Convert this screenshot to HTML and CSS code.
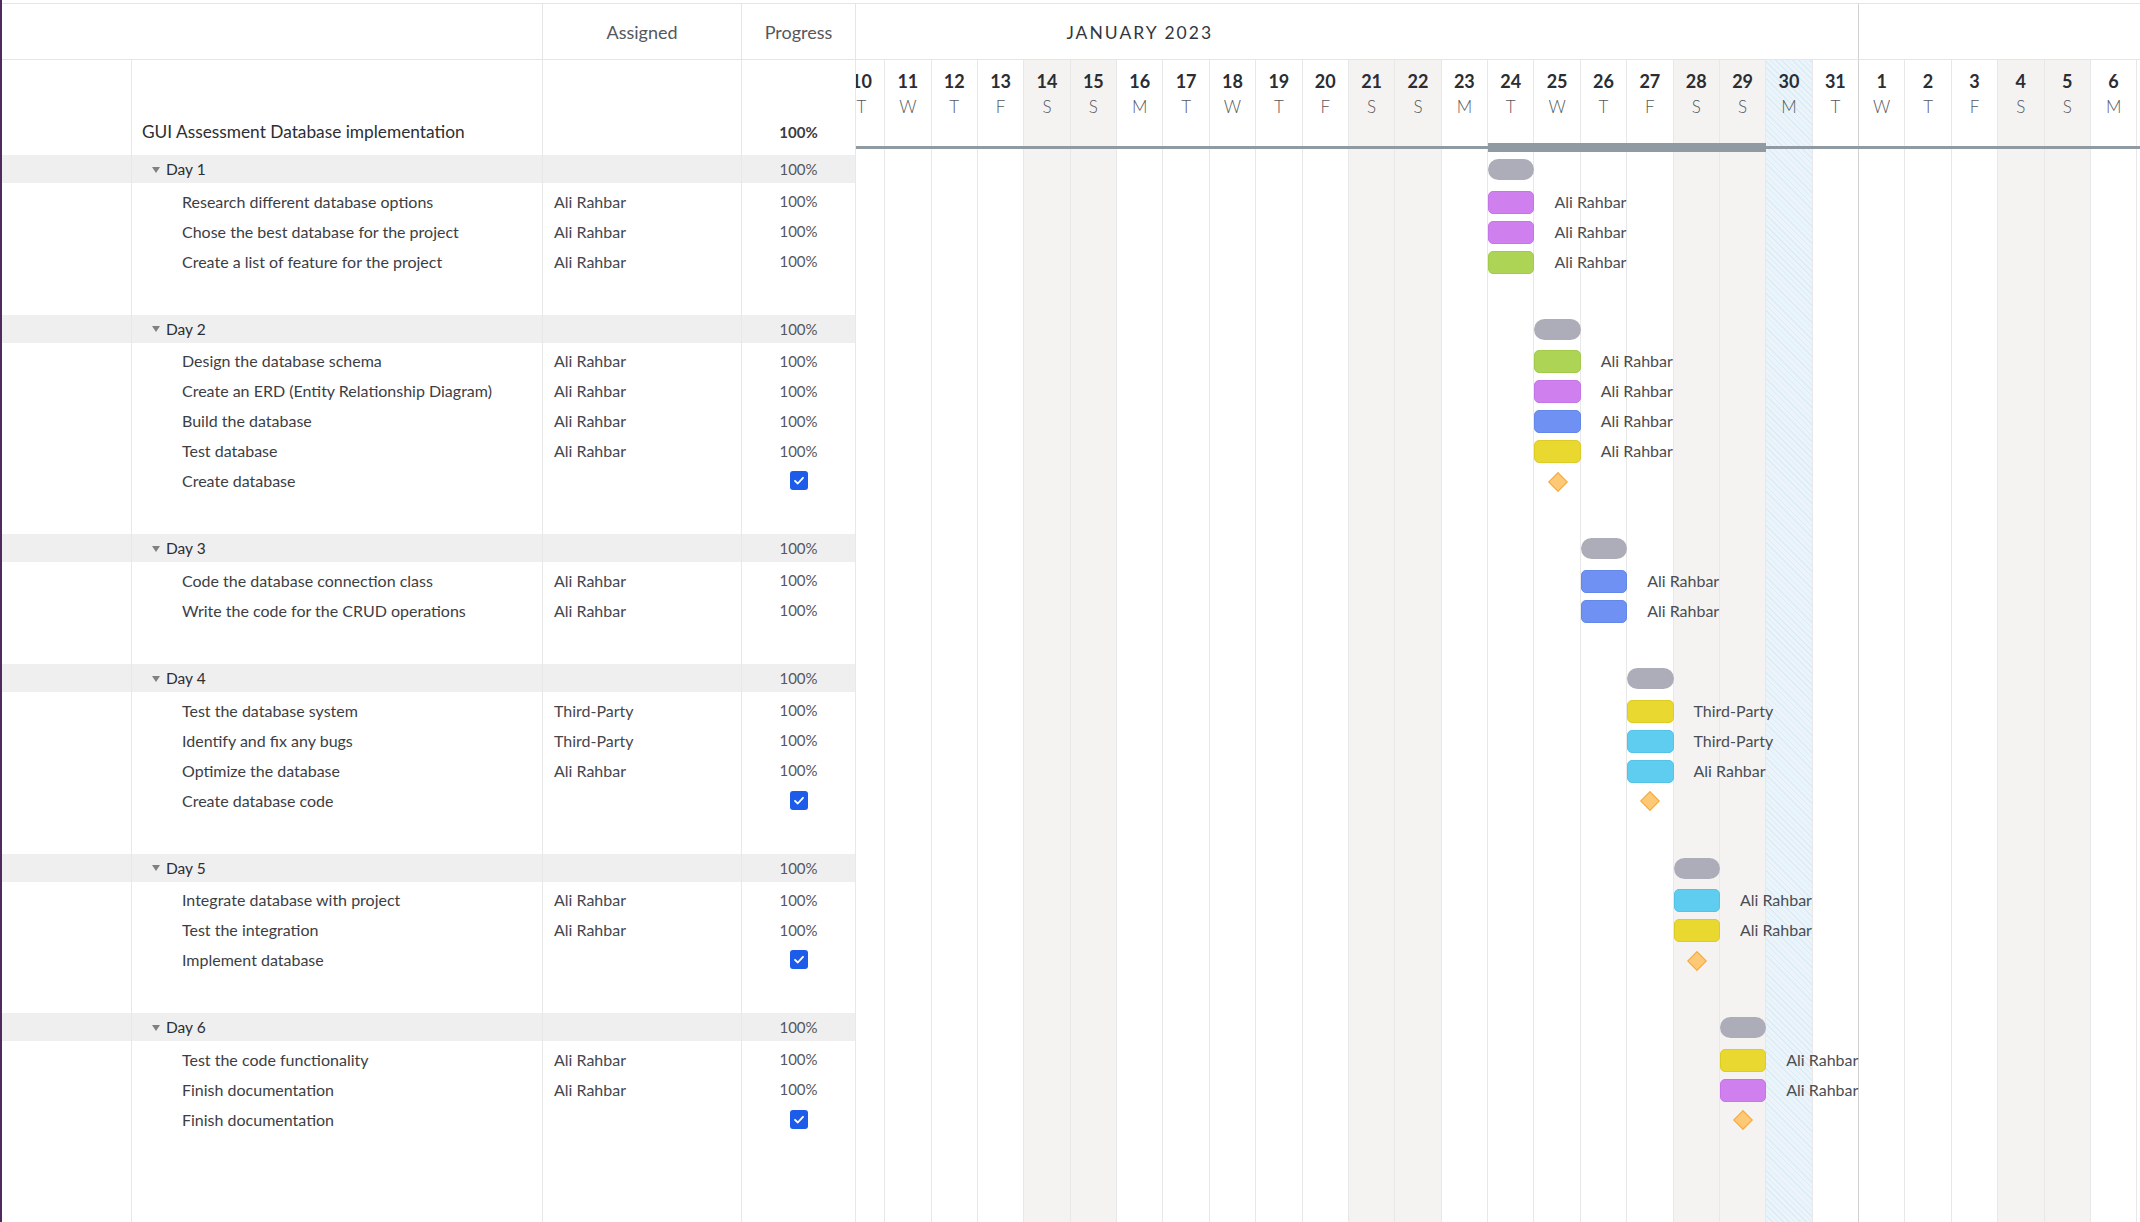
FILE: index.html
```html
<!DOCTYPE html>
<html lang="en">
<head>
<meta charset="utf-8">
<title>GUI Assessment Database implementation</title>
<link rel="stylesheet" href="styles.css">
</head>
<body>
<div class="app">
  <section class="left">
    <div class="lhead">
      <div class="hc hc-name"></div>
      <div class="hc">Assigned</div>
      <div class="hc">Progress</div>
    </div>
    <div class="lbody">
      <div class="row project"><div class="c"></div><div class="c name">GUI Assessment Database implementation</div><div class="c who"></div><div class="c pct strong">100%</div></div>

      <div class="row group"><div class="c"></div><div class="c name"><span class="caret"></span>Day 1</div><div class="c who"></div><div class="c pct">100%</div></div>
      <div class="row task"><div class="c"></div><div class="c name">Research different database options</div><div class="c who">Ali Rahbar</div><div class="c pct">100%</div></div>
      <div class="row task"><div class="c"></div><div class="c name">Chose the best database for the project</div><div class="c who">Ali Rahbar</div><div class="c pct">100%</div></div>
      <div class="row task"><div class="c"></div><div class="c name">Create a list of feature for the project</div><div class="c who">Ali Rahbar</div><div class="c pct">100%</div></div>
      <div class="row spacer"><div class="c"></div><div class="c"></div><div class="c"></div><div class="c"></div></div>

      <div class="row group"><div class="c"></div><div class="c name"><span class="caret"></span>Day 2</div><div class="c who"></div><div class="c pct">100%</div></div>
      <div class="row task"><div class="c"></div><div class="c name">Design the database schema</div><div class="c who">Ali Rahbar</div><div class="c pct">100%</div></div>
      <div class="row task"><div class="c"></div><div class="c name">Create an ERD (Entity Relationship Diagram)</div><div class="c who">Ali Rahbar</div><div class="c pct">100%</div></div>
      <div class="row task"><div class="c"></div><div class="c name">Build the database</div><div class="c who">Ali Rahbar</div><div class="c pct">100%</div></div>
      <div class="row task"><div class="c"></div><div class="c name">Test database</div><div class="c who">Ali Rahbar</div><div class="c pct">100%</div></div>
      <div class="row task"><div class="c"></div><div class="c name">Create database</div><div class="c who"></div><div class="c pct"><span class="check"><svg viewBox="0 0 18 19" width="18" height="19"><path d="M5 9.8 L7.8 12.5 L13 6.8" fill="none" stroke="#fff" stroke-width="1.8" stroke-linecap="round" stroke-linejoin="round"/></svg></span></div></div>
      <div class="row spacer"><div class="c"></div><div class="c"></div><div class="c"></div><div class="c"></div></div>

      <div class="row group"><div class="c"></div><div class="c name"><span class="caret"></span>Day 3</div><div class="c who"></div><div class="c pct">100%</div></div>
      <div class="row task"><div class="c"></div><div class="c name">Code the database connection class</div><div class="c who">Ali Rahbar</div><div class="c pct">100%</div></div>
      <div class="row task"><div class="c"></div><div class="c name">Write the code for the CRUD operations</div><div class="c who">Ali Rahbar</div><div class="c pct">100%</div></div>
      <div class="row spacer"><div class="c"></div><div class="c"></div><div class="c"></div><div class="c"></div></div>

      <div class="row group"><div class="c"></div><div class="c name"><span class="caret"></span>Day 4</div><div class="c who"></div><div class="c pct">100%</div></div>
      <div class="row task"><div class="c"></div><div class="c name">Test the database system</div><div class="c who">Third-Party</div><div class="c pct">100%</div></div>
      <div class="row task"><div class="c"></div><div class="c name">Identify and fix any bugs</div><div class="c who">Third-Party</div><div class="c pct">100%</div></div>
      <div class="row task"><div class="c"></div><div class="c name">Optimize the database</div><div class="c who">Ali Rahbar</div><div class="c pct">100%</div></div>
      <div class="row task"><div class="c"></div><div class="c name">Create database code</div><div class="c who"></div><div class="c pct"><span class="check"><svg viewBox="0 0 18 19" width="18" height="19"><path d="M5 9.8 L7.8 12.5 L13 6.8" fill="none" stroke="#fff" stroke-width="1.8" stroke-linecap="round" stroke-linejoin="round"/></svg></span></div></div>
      <div class="row spacer"><div class="c"></div><div class="c"></div><div class="c"></div><div class="c"></div></div>

      <div class="row group"><div class="c"></div><div class="c name"><span class="caret"></span>Day 5</div><div class="c who"></div><div class="c pct">100%</div></div>
      <div class="row task"><div class="c"></div><div class="c name">Integrate database with project</div><div class="c who">Ali Rahbar</div><div class="c pct">100%</div></div>
      <div class="row task"><div class="c"></div><div class="c name">Test the integration</div><div class="c who">Ali Rahbar</div><div class="c pct">100%</div></div>
      <div class="row task"><div class="c"></div><div class="c name">Implement database</div><div class="c who"></div><div class="c pct"><span class="check"><svg viewBox="0 0 18 19" width="18" height="19"><path d="M5 9.8 L7.8 12.5 L13 6.8" fill="none" stroke="#fff" stroke-width="1.8" stroke-linecap="round" stroke-linejoin="round"/></svg></span></div></div>
      <div class="row spacer"><div class="c"></div><div class="c"></div><div class="c"></div><div class="c"></div></div>

      <div class="row group"><div class="c"></div><div class="c name"><span class="caret"></span>Day 6</div><div class="c who"></div><div class="c pct">100%</div></div>
      <div class="row task"><div class="c"></div><div class="c name">Test the code functionality</div><div class="c who">Ali Rahbar</div><div class="c pct">100%</div></div>
      <div class="row task"><div class="c"></div><div class="c name">Finish documentation</div><div class="c who">Ali Rahbar</div><div class="c pct">100%</div></div>
      <div class="row task"><div class="c"></div><div class="c name">Finish documentation</div><div class="c who"></div><div class="c pct"><span class="check"><svg viewBox="0 0 18 19" width="18" height="19"><path d="M5 9.8 L7.8 12.5 L13 6.8" fill="none" stroke="#fff" stroke-width="1.8" stroke-linecap="round" stroke-linejoin="round"/></svg></span></div></div>
      <div class="row filler"><div class="c"></div><div class="c"></div><div class="c"></div><div class="c"></div></div>
    </div>
  </section>

  <section class="timeline">
    <div class="track">
      <div class="month jan">JANUARY 2023</div>
      <div class="month feb"></div>

      <div class="day wkend" style="grid-column: 1"><b>1</b><i>S</i></div>
      <div class="day" style="grid-column: 2"><b>2</b><i>M</i></div>
      <div class="day" style="grid-column: 3"><b>3</b><i>T</i></div>
      <div class="day" style="grid-column: 4"><b>4</b><i>W</i></div>
      <div class="day" style="grid-column: 5"><b>5</b><i>T</i></div>
      <div class="day" style="grid-column: 6"><b>6</b><i>F</i></div>
      <div class="day wkend" style="grid-column: 7"><b>7</b><i>S</i></div>
      <div class="day wkend" style="grid-column: 8"><b>8</b><i>S</i></div>
      <div class="day" style="grid-column: 9"><b>9</b><i>M</i></div>
      <div class="day" style="grid-column: 10"><b>10</b><i>T</i></div>
      <div class="day" style="grid-column: 11"><b>11</b><i>W</i></div>
      <div class="day" style="grid-column: 12"><b>12</b><i>T</i></div>
      <div class="day" style="grid-column: 13"><b>13</b><i>F</i></div>
      <div class="day wkend" style="grid-column: 14"><b>14</b><i>S</i></div>
      <div class="day wkend" style="grid-column: 15"><b>15</b><i>S</i></div>
      <div class="day" style="grid-column: 16"><b>16</b><i>M</i></div>
      <div class="day" style="grid-column: 17"><b>17</b><i>T</i></div>
      <div class="day" style="grid-column: 18"><b>18</b><i>W</i></div>
      <div class="day" style="grid-column: 19"><b>19</b><i>T</i></div>
      <div class="day" style="grid-column: 20"><b>20</b><i>F</i></div>
      <div class="day wkend" style="grid-column: 21"><b>21</b><i>S</i></div>
      <div class="day wkend" style="grid-column: 22"><b>22</b><i>S</i></div>
      <div class="day" style="grid-column: 23"><b>23</b><i>M</i></div>
      <div class="day" style="grid-column: 24"><b>24</b><i>T</i></div>
      <div class="day" style="grid-column: 25"><b>25</b><i>W</i></div>
      <div class="day" style="grid-column: 26"><b>26</b><i>T</i></div>
      <div class="day" style="grid-column: 27"><b>27</b><i>F</i></div>
      <div class="day wkend" style="grid-column: 28"><b>28</b><i>S</i></div>
      <div class="day wkend" style="grid-column: 29"><b>29</b><i>S</i></div>
      <div class="day today" style="grid-column: 30"><b>30</b><i>M</i></div>
      <div class="day monthend" style="grid-column: 31"><b>31</b><i>T</i></div>
      <div class="day" style="grid-column: 32"><b>1</b><i>W</i></div>
      <div class="day" style="grid-column: 33"><b>2</b><i>T</i></div>
      <div class="day" style="grid-column: 34"><b>3</b><i>F</i></div>
      <div class="day wkend" style="grid-column: 35"><b>4</b><i>S</i></div>
      <div class="day wkend" style="grid-column: 36"><b>5</b><i>S</i></div>
      <div class="day" style="grid-column: 37"><b>6</b><i>M</i></div>
      <div class="day" style="grid-column: 38"><b>7</b><i>T</i></div>

      <div class="sumline"></div>
      <div class="sumbar"></div>

      <div class="pill" style="grid-area: 3 / 24"></div>
      <div class="bar purple" style="grid-area: 4 / 24"></div><div class="lbl" style="grid-area: 4 / 25">Ali Rahbar</div>
      <div class="bar purple" style="grid-area: 5 / 24"></div><div class="lbl" style="grid-area: 5 / 25">Ali Rahbar</div>
      <div class="bar green" style="grid-area: 6 / 24"></div><div class="lbl" style="grid-area: 6 / 25">Ali Rahbar</div>

      <div class="pill" style="grid-area: 8 / 25"></div>
      <div class="bar green" style="grid-area: 9 / 25"></div><div class="lbl" style="grid-area: 9 / 26">Ali Rahbar</div>
      <div class="bar purple" style="grid-area: 10 / 25"></div><div class="lbl" style="grid-area: 10 / 26">Ali Rahbar</div>
      <div class="bar blue" style="grid-area: 11 / 25"></div><div class="lbl" style="grid-area: 11 / 26">Ali Rahbar</div>
      <div class="bar yellow" style="grid-area: 12 / 25"></div><div class="lbl" style="grid-area: 12 / 26">Ali Rahbar</div>
      <div class="ms" style="grid-area: 13 / 25"></div>

      <div class="pill" style="grid-area: 15 / 26"></div>
      <div class="bar blue" style="grid-area: 16 / 26"></div><div class="lbl" style="grid-area: 16 / 27">Ali Rahbar</div>
      <div class="bar blue" style="grid-area: 17 / 26"></div><div class="lbl" style="grid-area: 17 / 27">Ali Rahbar</div>

      <div class="pill" style="grid-area: 19 / 27"></div>
      <div class="bar yellow" style="grid-area: 20 / 27"></div><div class="lbl" style="grid-area: 20 / 28">Third-Party</div>
      <div class="bar cyan" style="grid-area: 21 / 27"></div><div class="lbl" style="grid-area: 21 / 28">Third-Party</div>
      <div class="bar cyan" style="grid-area: 22 / 27"></div><div class="lbl" style="grid-area: 22 / 28">Ali Rahbar</div>
      <div class="ms" style="grid-area: 23 / 27"></div>

      <div class="pill" style="grid-area: 25 / 28"></div>
      <div class="bar cyan" style="grid-area: 26 / 28"></div><div class="lbl" style="grid-area: 26 / 29">Ali Rahbar</div>
      <div class="bar yellow" style="grid-area: 27 / 28"></div><div class="lbl" style="grid-area: 27 / 29">Ali Rahbar</div>
      <div class="ms" style="grid-area: 28 / 28"></div>

      <div class="pill" style="grid-area: 30 / 29"></div>
      <div class="bar yellow" style="grid-area: 31 / 29"></div><div class="lbl" style="grid-area: 31 / 30">Ali Rahbar</div>
      <div class="bar purple" style="grid-area: 32 / 29"></div><div class="lbl" style="grid-area: 32 / 30">Ali Rahbar</div>
      <div class="ms" style="grid-area: 33 / 29"></div>
    </div>
  </section>
</div>
</body>
</html>
```

FILE: styles.css
```css
* { box-sizing: border-box; }

html, body {
  margin: 0;
  padding: 0;
  background: #fff;
}

body {
  font-family: "Lato", "Open Sans", "Liberation Sans", sans-serif;
  color: #3c3e44;
  font-size: 16px;
}

.app {
  display: flex;
  height: 1222px;
  padding-top: 3px;
  border-left: 2px solid #4f2b5d;
  overflow: hidden;
}

/* ---------- left grid ---------- */
.left {
  flex: 0 0 854px;
  display: flex;
  flex-direction: column;
}

.lhead {
  display: grid;
  grid-template-columns: 541px 199px 114px;
  height: 57px;
  border-top: 1px solid #e5e5e5;
  border-bottom: 1px solid #e5e5e5;
}

.hc {
  display: flex;
  align-items: center;
  justify-content: center;
  border-right: 1px solid #e5e5e5;
  font-size: 18px;
  color: #55575d;
}

.lbody {
  flex: 1;
  display: flex;
  flex-direction: column;
}

.row {
  display: grid;
  grid-template-columns: 130px 411px 199px 114px;
}

.c {
  border-right: 1px solid #e8e8e8;
  display: flex;
  align-items: center;
  white-space: nowrap;
}

.row.project { height: 95px; }
.row.project .c { align-items: flex-end; padding-bottom: 12px; line-height: 22px; }
.row.project .name { padding-left: 10px; font-size: 17.3px; color: #2c2e34; }

.row.group {
  height: 31px;
  background: linear-gradient(#efefef, #efefef) top left / 100% 28px no-repeat;
}
.row.group .c { padding-bottom: 3px; }
.row.group .name { padding-left: 20px; color: #2c2e34; font-size: 15.5px; }

.caret {
  width: 0;
  height: 0;
  border-left: 4px solid transparent;
  border-right: 4px solid transparent;
  border-top: 6px solid #808085;
  margin-right: 6px;
  margin-top: 1px;
}

.row.task { height: 30px; }
.row.task .name { padding-left: 50px; font-size: 16px; }

.row.spacer { height: 38.7px; }
.row.filler { flex: 1; }

.who { padding-left: 11px; color: #45474d; font-size: 16px; }

.pct {
  justify-content: center;
  color: #55575d;
  font-size: 15px;
}
.pct.strong { font-weight: 700; color: #3a3c42; }

.check {
  display: block;
  width: 18px;
  height: 19px;
  border-radius: 3px;
  background: #1d5ce8;
}
.check svg { display: block; }

/* ---------- timeline ---------- */
.timeline {
  flex: 1;
  overflow: hidden;
  min-width: 0;
}

.track {
  display: grid;
  grid-template-columns: repeat(38, 46.375px);
  grid-template-rows:
    57px 95px
    31px repeat(3, 30px) 38.7px
    31px repeat(5, 30px) 38.7px
    31px repeat(2, 30px) 38.7px
    31px repeat(4, 30px) 38.7px
    31px repeat(3, 30px) 38.7px
    31px repeat(3, 30px)
    1fr;
  height: 100%;
  width: max-content;
  margin-left: -434.6px;
}

.month {
  grid-row: 1;
  border-top: 1px solid #e5e5e5;
  border-bottom: 1px solid #e5e5e5;
  display: flex;
  align-items: center;
  justify-content: center;
  padding-top: 2px;
  font-size: 17.5px;
  font-weight: 400;
  letter-spacing: 2px;
  color: #34363e;
}
.month.jan { grid-column: 1 / 32; border-right: 1px solid #d2d2d2; }
.month.feb { grid-column: 32 / 39; }

.day {
  grid-row: 2 / -1;
  border-right: 1px solid #e8e8e8;
  display: flex;
  flex-direction: column;
  align-items: center;
  padding-top: 9.5px;
}
.day b {
  font-weight: 700;
  font-size: 18px;
  line-height: 22px;
  color: #2b2d33;
}
.day i {
  font-style: normal;
  font-weight: 300;
  font-size: 17px;
  line-height: 22px;
  margin-top: 4px;
  color: #55575d;
}
.day.wkend { background: #f4f3f2; }
.day.today {
  background: repeating-linear-gradient(45deg, #dcecf5 0 1px, #eaf4fa 1px 4px);
}
.day.monthend { border-right-color: #d2d2d2; }

.sumline {
  grid-row: 2;
  grid-column: 1 / -1;
  align-self: end;
  height: 3px;
  margin-bottom: 6px;
  background: #8f9aa2;
}
.sumbar {
  grid-row: 2;
  grid-column: 24 / 30;
  align-self: end;
  height: 9px;
  margin-bottom: 3px;
  background: #8f9aa2;
}

.pill {
  align-self: start;
  height: 21px;
  margin-top: 4px;
  border-radius: 11px;
  background: #adadb9;
}

.bar {
  align-self: center;
  height: 23px;
  margin-top: 2px;
  border-radius: 5px;
  border: 1px solid transparent;
}
.bar.purple { background: #cf80ee; border-color: #c476e6; }
.bar.green  { background: #add454; border-color: #a3ca4b; }
.bar.blue   { background: #6f91f4; border-color: #6487ea; }
.bar.yellow { background: #e9d830; border-color: #ddcc28; }
.bar.cyan   { background: #5fcdf0; border-color: #55c3e6; }

.lbl {
  align-self: center;
  justify-self: start;
  margin-left: 20px;
  white-space: nowrap;
  font-size: 16px;
  color: #4b4d53;
}

.ms {
  align-self: center;
  justify-self: center;
  width: 14px;
  height: 14px;
  margin-top: 2px;
  transform: rotate(45deg);
  background: #fdc977;
  border: 1px solid #f6a93b;
}
```
